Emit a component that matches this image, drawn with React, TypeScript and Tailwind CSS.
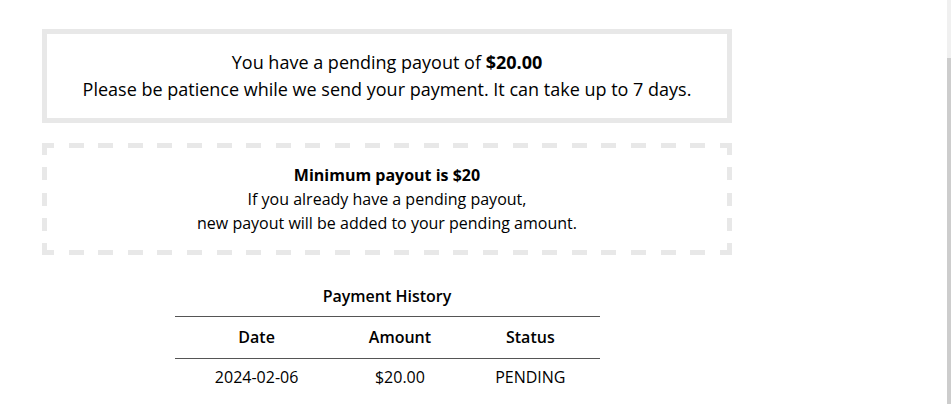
const history = [{ date: "2024-02-06", amount: "$20.00", status: "PENDING" }];

// dashed frame drawn with gradients so the dash rhythm matches the original
const dashed =
  "[background:repeating-linear-gradient(90deg,#e8e8e8_0_12px,transparent_12px_26.6px,#e8e8e8_26.6px_29.6px)_top/100%_5px_no-repeat,repeating-linear-gradient(90deg,#e8e8e8_0_12px,transparent_12px_26.6px,#e8e8e8_26.6px_29.6px)_bottom/100%_5px_no-repeat,repeating-linear-gradient(180deg,#e8e8e8_0_12px,transparent_12px_24.3px,#e8e8e8_24.3px_25.3px)_left/5px_100%_no-repeat,repeating-linear-gradient(180deg,#e8e8e8_0_12px,transparent_12px_24.3px,#e8e8e8_24.3px_25.3px)_right/5px_100%_no-repeat]";

export default function App() {
  return (
    <div className="flex h-[404px] w-[951px] overflow-hidden bg-white text-black" style={{ fontFamily: '"Open Sans", "Liberation Sans", sans-serif' }}>
      <div className="flex-1">
        <div className="ml-[42px] mt-[29px] w-[690px]">
          <div className="border-[5px] border-[#e8e8e8] py-[15px] text-center text-[18px] leading-[27px]">
            <p>You have a pending payout of <b className="font-bold">$20.00</b></p>
            <p>Please be patience while we send your payment. It can take up to 7 days.</p>
          </div>

          <div className={`mt-[20px] h-[112px] p-[5px] text-center text-[16px] leading-[24px] ${dashed}`}>
            <div className="pt-[15px]">
              <p className="font-bold">Minimum payout is $20</p>
              <p>If you already have a pending payout,</p>
              <p>new payout will be added to your pending amount.</p>
            </div>
          </div>

          <table className="mx-auto mt-[29px] w-[425px] border-collapse text-center text-[16px] leading-[25px]">
            <caption className="pb-[8px] font-semibold leading-[24px]">Payment History</caption>
            <thead>
              <tr className="border-y border-[#555]">
                <th className="py-2 font-semibold">Date</th>
                <th className="py-2 font-semibold">Amount</th>
                <th className="py-2 font-semibold">Status</th>
              </tr>
            </thead>
            <tbody>
              {history.map((h) => (
                <tr key={h.date}>
                  <td className="py-[6px]">{h.date}</td>
                  <td className="py-[6px]">{h.amount}</td>
                  <td className="py-[6px]">{h.status}</td>
                </tr>
              ))}
            </tbody>
          </table>
        </div>
      </div>
      <div className="flex w-[4px] flex-col">
        <div className="h-[58px] bg-[#f0f0f0]" />
        <div className="flex-1 bg-[#cdcdcd]" />
      </div>
    </div>
  );
}
